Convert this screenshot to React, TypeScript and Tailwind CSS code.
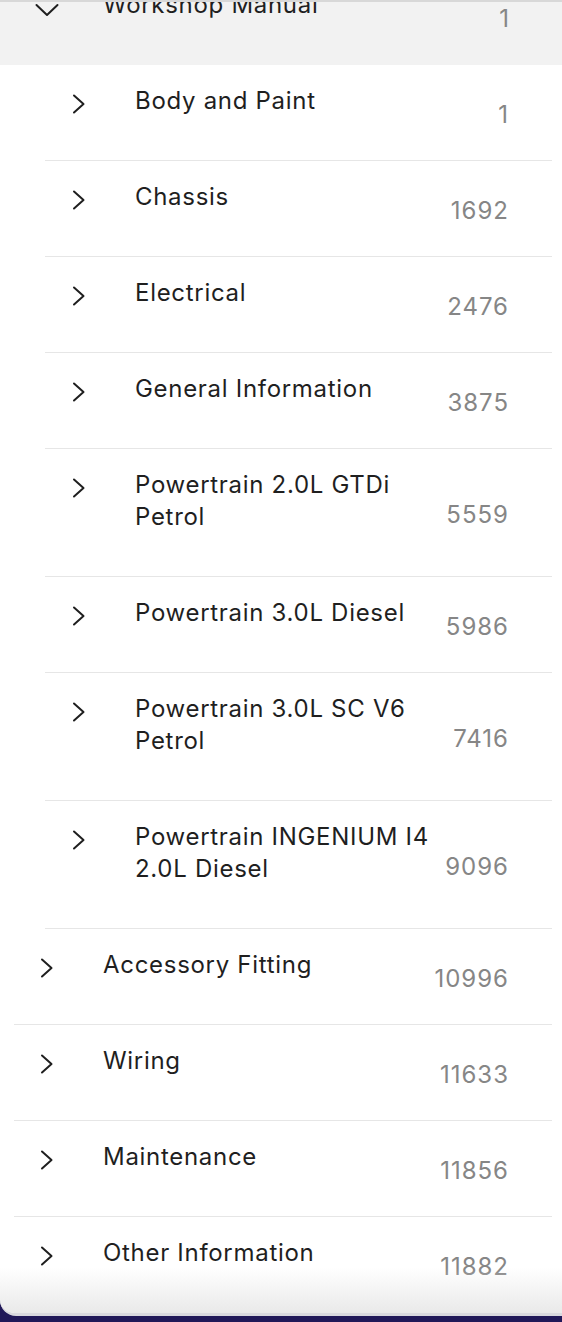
const font = { fontFamily: "Inter, 'Noto Sans', sans-serif" };

type Item = { title: string; count: number };

const children: Item[] = [
  { title: "Body and Paint", count: 1 },
  { title: "Chassis", count: 1692 },
  { title: "Electrical", count: 2476 },
  { title: "General Information", count: 3875 },
  { title: "Powertrain 2.0L GTDi Petrol", count: 5559 },
  { title: "Powertrain 3.0L Diesel", count: 5986 },
  { title: "Powertrain 3.0L SC V6 Petrol", count: 7416 },
  { title: "Powertrain INGENIUM I4 2.0L Diesel", count: 9096 },
];

const topLevel: Item[] = [
  { title: "Accessory Fitting", count: 10996 },
  { title: "Wiring", count: 11633 },
  { title: "Maintenance", count: 11856 },
  { title: "Other Information", count: 11882 },
];

const ChevronRight = () => (
  <svg width="14" height="20" viewBox="0 0 14 20" fill="none">
    <path d="M2 1.5 L11.5 10 L2 18.5" stroke="#1f1f1f" strokeWidth="2" strokeLinecap="round" strokeLinejoin="round" />
  </svg>
);

const ChevronDown = () => (
  <svg width="24" height="14" viewBox="0 0 24 14" fill="none">
    <path d="M1.5 2 L12 12 L22.5 2" stroke="#1f1f1f" strokeWidth="2" strokeLinecap="round" strokeLinejoin="round" />
  </svg>
);

const Row = ({ item, child }: { item: Item; child?: boolean }) => (
  <div
    className={`flex items-center border-b border-[#e6e6e6] mr-[10px] ${child ? "ml-[45px]" : "ml-[14px]"}`}
  >
    <div className={`self-start mt-[29px] shrink-0 ${child ? "pl-[27px] w-[90px]" : "pl-[26px] w-[89px]"}`}>
      <ChevronRight />
    </div>
    <div className="flex-1 pt-5 pb-[43px] text-[24px] leading-8 tracking-[0.7px] text-[#1f1f1f]">
      {item.title}
    </div>
    <div className="mt-1 w-[120px] shrink-0 pr-[43px] text-right text-[24px] leading-8 tracking-[1px] text-[#868686]">
      {item.count}
    </div>
  </div>
);

export default function App() {
  return (
    <div className="h-[1322px] w-[562px] overflow-hidden bg-[#201858]" style={font}>
      <div className="relative h-[1316px] overflow-hidden rounded-bl-[16px] border-b-[3px] border-[#d9d9de] bg-white">
        <div className="absolute inset-x-0 top-0 z-10 h-[2px] bg-[#d8d8d8]" />

        <div className="-mt-[31px] flex items-center bg-[#f2f2f2] pr-[10px]">
          <div className="self-start mt-[34px] w-[103px] shrink-0 pl-[35px]">
            <ChevronDown />
          </div>
          <div className="flex-1 pt-5 pb-11 text-[24px] leading-8 tracking-[0.7px] text-[#1f1f1f]">
            Workshop Manual
          </div>
          <div className="mt-1 w-[120px] shrink-0 pr-[43px] text-right text-[24px] leading-8 text-[#868686]">1</div>
        </div>

        {children.map((c) => (
          <Row key={c.title} item={c} child />
        ))}
        {topLevel.map((c) => (
          <Row key={c.title} item={c} />
        ))}

        <div className="pointer-events-none absolute inset-x-0 bottom-0 h-[45px] bg-gradient-to-b from-transparent to-[#e9e9e9]" />
      </div>
    </div>
  );
}
